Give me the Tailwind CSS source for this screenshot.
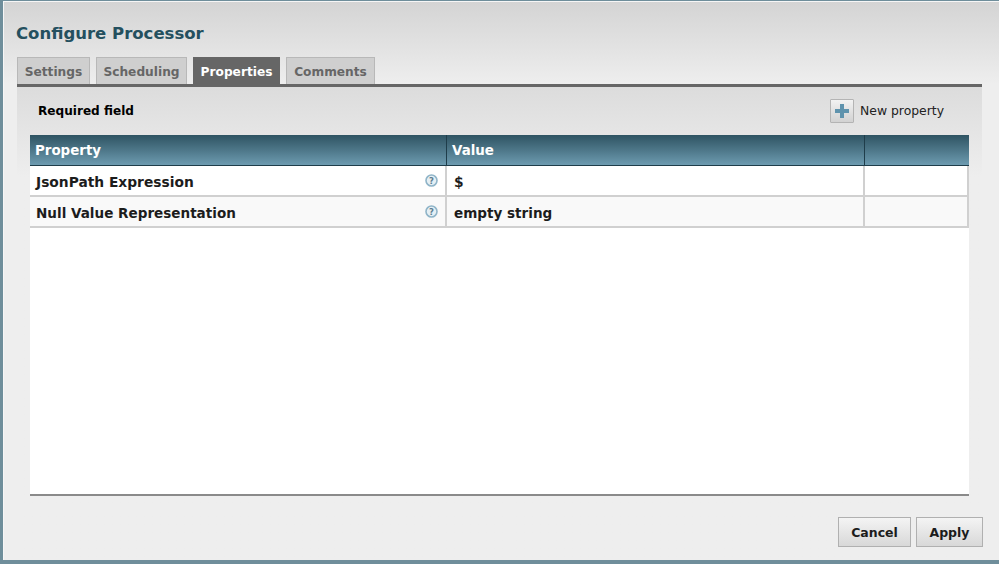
<!DOCTYPE html>
<html lang="en">
<head>
<meta charset="UTF-8">
<title>Configure Processor</title>
<script src="https://cdn.jsdelivr.net/npm/@tailwindcss/browser@4"></script>
</head>
<body class="w-[999px] h-[564px] overflow-hidden bg-[#6f8e9b] font-['DejaVu_Sans',sans-serif]">
<div class="ml-[3px] mt-[1px] h-[559px] flex flex-col bg-[#eeeeee] border-l border-t border-[#f6f6f6]">
    <!-- title + tabs -->
    <div class="h-[82px] pl-[12px] bg-gradient-to-b from-[#d4d4d4] to-[#eeeeee]">
        <h2 class="pt-[21px] h-[55px] text-[16.5px] leading-[22px] font-bold text-[#24505f]">Configure Processor</h2>
        <div class="flex items-end h-[27px] gap-[6px] pl-[1px] text-[12.2px] font-bold">
            <div class="w-[73px] h-[27px] pt-[2px] flex items-center justify-center bg-[#cfcfcf] border border-[#b8b8b8] border-b-0 text-[#666666]">Settings</div>
            <div class="w-[91px] h-[27px] pt-[2px] flex items-center justify-center bg-[#cfcfcf] border border-[#b8b8b8] border-b-0 text-[#666666]">Scheduling</div>
            <div class="w-[87px] h-[27px] pt-[2px] flex items-center justify-center bg-[#666666] border border-[#666666] border-b-0 text-white">Properties</div>
            <div class="w-[89px] h-[27px] pt-[2px] flex items-center justify-center bg-[#cfcfcf] border border-[#b8b8b8] border-b-0 text-[#666666]">Comments</div>
        </div>
    </div>

    <!-- tab panel -->
    <div class="ml-[13px] w-[965px] border-t-[3px] border-[#666666] bg-gradient-to-b from-[#dcdcdc] from-0% to-[#eeeeee] to-[90px] flex-1 flex flex-col">
        <div class="h-[48px] pl-[21px] pr-[38px] flex items-center justify-between">
            <span class="text-[12.1px] font-bold text-black">Required field</span>
            <div class="flex items-center gap-[6px]">
                <span class="w-[24px] h-[24px] flex items-center justify-center bg-gradient-to-b from-[#f2f2f2] to-[#d2d2d2] border border-[#b4b4b4] rounded-[1px]">
                    <svg width="16" height="16" viewBox="0 0 16 16"><path d="M6 1h4v5h5v4h-5v5H6v-5H1V6h5z" fill="#5f93ad"/></svg>
                </span>
                <span class="text-[12.4px] text-[#222222]">New property</span>
            </div>
        </div>

        <!-- table -->
        <div class="ml-[13px] w-[939px] h-[361px] bg-white border-b-2 border-[#8a8a8a]">
            <div class="grid grid-cols-[417px_418px_104px] h-[31px] bg-gradient-to-b from-[#2f5463] to-[#6d9bb0] border-b border-[#1f3d4a] text-[13.4px] font-bold text-white">
                <div class="pl-[5px] pt-[2px] flex items-center border-r border-[#1f3d4a]">Property</div>
                <div class="pl-[5px] pt-[2px] flex items-center border-r border-[#1f3d4a]">Value</div>
                <div></div>
            </div>
            <div class="grid grid-cols-[417px_418px_104px] h-[31px] bg-white border-b-2 border-[#d0d0d0] text-[13.8px] font-bold text-[#1c1c1c]">
                <div class="pl-[6px] pr-[7px] pt-[3px] flex items-center justify-between border-r-2 border-[#d0d0d0]">
                    <span>JsonPath Expression</span>
                    <svg class="-mt-[3px]" width="13" height="13" viewBox="0 0 13 13"><circle cx="6.5" cy="6.5" r="5.5" fill="#e6eff4" stroke="#8fb4c8" stroke-width="1.6"/><text x="6.5" y="9.6" text-anchor="middle" font-size="8.5" font-weight="700" fill="#5d7f92" font-family="DejaVu Sans, sans-serif">?</text></svg>
                </div>
                <div class="pl-[7px] pt-[3px] flex items-center border-r-2 border-[#d0d0d0]">$</div>
                <div class="border-r-2 border-[#d0d0d0]"></div>
            </div>
            <div class="grid grid-cols-[417px_418px_104px] h-[31px] bg-[#f9f9f9] border-b-2 border-[#d0d0d0] text-[13.55px] font-bold text-[#1c1c1c]">
                <div class="pl-[6px] pr-[7px] pt-[3px] flex items-center justify-between border-r-2 border-[#d0d0d0]">
                    <span>Null Value Representation</span>
                    <svg class="-mt-[3px]" width="13" height="13" viewBox="0 0 13 13"><circle cx="6.5" cy="6.5" r="5.5" fill="#e6eff4" stroke="#8fb4c8" stroke-width="1.6"/><text x="6.5" y="9.6" text-anchor="middle" font-size="8.5" font-weight="700" fill="#5d7f92" font-family="DejaVu Sans, sans-serif">?</text></svg>
                </div>
                <div class="pl-[7px] pt-[3px] flex items-center border-r-2 border-[#d0d0d0]">empty string</div>
                <div class="border-r-2 border-[#d0d0d0]"></div>
            </div>
        </div>

        <!-- buttons -->
        <div class="flex justify-end gap-[5px] mt-[21px] -mr-[1px] text-[12.5px] font-bold text-[#1c1c1c]">
            <div class="w-[73px] h-[30px] pt-[2px] flex items-center justify-center bg-gradient-to-b from-[#f4f4f4] to-[#d8d8d8] border border-[#b0b0b0]">Cancel</div>
            <div class="w-[67px] h-[30px] pt-[2px] flex items-center justify-center bg-gradient-to-b from-[#f4f4f4] to-[#d8d8d8] border border-[#b0b0b0]">Apply</div>
        </div>
    </div>
</div>
</body>
</html>
